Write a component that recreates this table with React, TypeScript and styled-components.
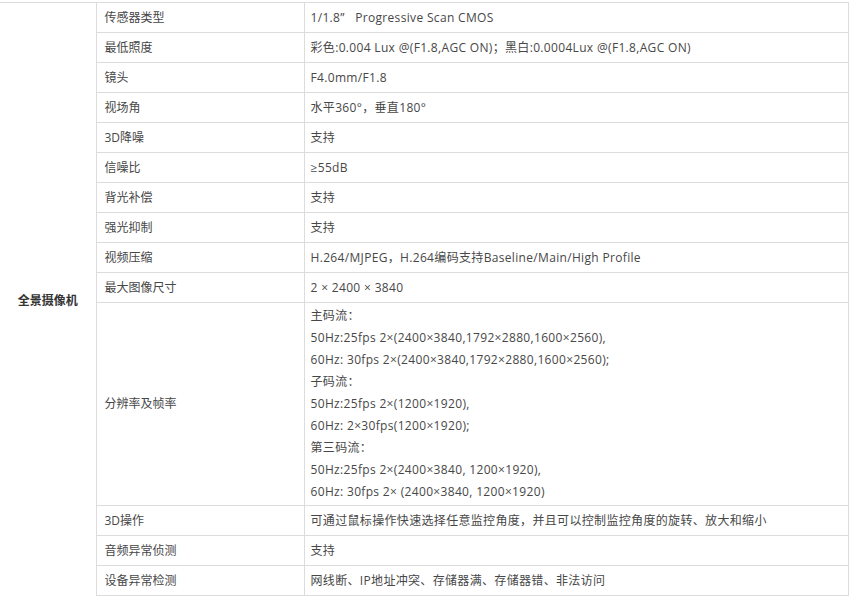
import React from "react";
import styled, { createGlobalStyle } from "styled-components";

const Global = createGlobalStyle`
  html, body { margin: 0; padding: 0; background: #fff; }
  body { font-family: "Open Sans", "Noto Sans CJK SC", sans-serif; }
`;

const Page = styled.div`
  padding-top: 2px;
`;

const Table = styled.table`
  border-collapse: collapse;
  table-layout: fixed;
  width: 848px;
  font-size: 12px;
  color: #474747;
`;

const Row = styled.tr<{ $tall?: boolean }>`
  height: ${(p) => (p.$tall ? "203px" : "30px")};
`;

const Group = styled.td`
  border-top: 1px solid #dcdcdc;
  border-right: 1px solid #dcdcdc;
  text-align: center;
  vertical-align: middle;
  font-weight: bold;
  color: #333;
  font-size: 12px;
  font-family: "Noto Sans CJK SC", sans-serif;
  padding: 0;
`;

const Name = styled.td`
  border: 1px solid #dcdcdc;
  padding: 2px 8px;
  line-height: 22px;
  vertical-align: middle;
  white-space: nowrap;
`;

const Value = styled.td`
  border: 1px solid #dcdcdc;
  padding: 2px 6px;
  line-height: 22px;
  vertical-align: middle;
  white-space: nowrap;
  letter-spacing: 0.33px;
`;

const Line = styled.div`
  line-height: 22px;
`;

const rows: [string, string][] = [
  ["传感器类型", "1/1.8\u201D\u00A0\u00A0\u00A0Progressive Scan CMOS"],
  ["最低照度", "彩色:0.004 Lux @(F1.8,AGC ON)；黑白:0.0004Lux @(F1.8,AGC ON)"],
  ["镜头", "F4.0mm/F1.8"],
  ["视场角", "水平360°，垂直180°"],
  ["3D降噪", "支持"],
  ["信噪比", "≥55dB"],
  ["背光补偿", "支持"],
  ["强光抑制", "支持"],
  ["视频压缩", "H.264/MJPEG，H.264编码支持Baseline/Main/High Profile"],
  ["最大图像尺寸", "2 × 2400 × 3840"],
];

const resLines = [
  "主码流：",
  "50Hz:25fps 2×(2400×3840,1792×2880,1600×2560),",
  "60Hz: 30fps 2×(2400×3840,1792×2880,1600×2560);",
  "子码流：",
  "50Hz:25fps 2×(1200×1920),",
  "60Hz: 2×30fps(1200×1920);",
  "第三码流：",
  "50Hz:25fps 2×(2400×3840, 1200×1920),",
  "60Hz: 30fps 2× (2400×3840, 1200×1920)",
];

const tail: [string, string][] = [
  ["3D操作", "可通过鼠标操作快速选择任意监控角度，并且可以控制监控角度的旋转、放大和缩小"],
  ["音频异常侦测", "支持"],
  ["设备异常检测", "网线断、IP地址冲突、存储器满、存储器错、非法访问"],
];

export default function App() {
  return (
    <Page>
      <Global />
      <Table>
        <colgroup>
          <col style={{ width: 96 }} />
          <col style={{ width: 208 }} />
          <col style={{ width: 544 }} />
        </colgroup>
        <tbody>
          {rows.map(([n, v], i) => (
            <Row key={n}>
              {i === 0 && <Group rowSpan={rows.length + 1 + tail.length}>全景摄像机</Group>}
              <Name>{n}</Name>
              <Value>{v}</Value>
            </Row>
          ))}
          <Row $tall>
            <Name>分辨率及帧率</Name>
            <Value>
              {resLines.map((l) => (
                <Line key={l}>{l}</Line>
              ))}
            </Value>
          </Row>
          {tail.map(([n, v]) => (
            <Row key={n}>
              <Name>{n}</Name>
              <Value>{v}</Value>
            </Row>
          ))}
        </tbody>
      </Table>
    </Page>
  );
}
